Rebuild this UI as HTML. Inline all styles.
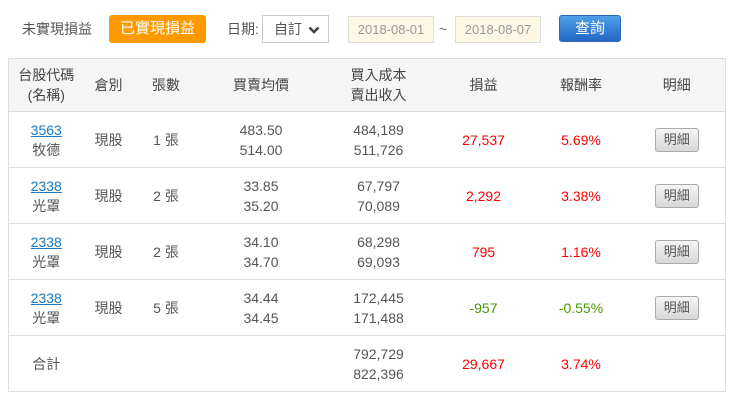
<!DOCTYPE html>
<html><head><meta charset="utf-8"><style>
*{box-sizing:border-box;margin:0;padding:0}
body{width:732px;height:405px;background:#fff;font-family:"Liberation Sans","Noto Sans CJK TC",sans-serif;font-size:14px;color:#555;position:relative;overflow:hidden}
.a{position:absolute}
.btnO{left:109px;top:15px;width:97px;height:28px;background:#f90;color:#fff;border-radius:3px;text-align:center;line-height:28px;font-size:15px}
.sel{left:262px;top:15px;width:67px;height:28px;border:1px solid #ccc;line-height:26px;padding-left:11px;font-size:14px}
.inp{top:16px;width:86px;height:27px;background:#fcf8e3;border:1px solid #ddd;color:#999;line-height:25px;text-align:center;font-size:13px}
.q{left:559px;top:15px;width:62px;height:27px;border-radius:3px;background:linear-gradient(#4fa0e6,#2366c4);border:1px solid #2a6ab8;color:#fff;text-align:center;line-height:25px;font-size:15px}
table{position:absolute;left:8px;top:58px;width:718px;border-collapse:collapse;border:1px solid #ddd}
td,th{text-align:center;border-top:1px solid #ddd;font-weight:normal;line-height:20px;padding:0}
th{background:#f5f5f5;height:53px;color:#444;font-size:14px}
td{height:56px}
a{color:#1a7ac7;text-decoration:underline}
.r{color:#f00}.g{color:#4a9a00}
.b{display:inline-block;width:44px;height:24px;line-height:22px;border:1px solid #aaa;border-radius:3px;background:linear-gradient(#f4f4f4,#d8d8d8);color:#555;font-size:13px}
</style></head><body>
<div class="a" style="left:22px;top:20px;line-height:18px">未實現損益</div>
<div class="a btnO">已實現損益</div>
<div class="a" style="left:227px;top:20px;line-height:18px">日期:</div>
<div class="a sel">自訂 <svg width="12" height="10" viewBox="0 0 12 10" style="vertical-align:-1px;margin-left:2px"><path d="M1.5 2.5L6 7L10.5 2.5" stroke="#444" stroke-width="2.6" fill="none"/></svg></div>
<div class="a inp" style="left:348px">2018-08-01</div>
<div class="a" style="left:439px;top:20px;line-height:18px;color:#777">~</div>
<div class="a inp" style="left:455px">2018-08-07</div>
<div class="a q">查詢</div>
<table>
<colgroup><col style="width:75px"><col style="width:50px"><col style="width:65px"><col style="width:125px"><col style="width:110px"><col style="width:100px"><col style="width:95px"><col></colgroup>
<tr><th>台股代碼<br>(名稱)</th><th>倉別</th><th>張數</th><th>買賣均價</th><th>買入成本<br>賣出收入</th><th>損益</th><th>報酬率</th><th>明細</th></tr>
<tr><td><a>3563</a><br>牧德</td><td>現股</td><td>1 張</td><td>483.50<br>514.00</td><td>484,189<br>511,726</td><td class="r">27,537</td><td class="r">5.69%</td><td><span class="b">明細</span></td></tr>
<tr><td><a>2338</a><br>光罩</td><td>現股</td><td>2 張</td><td>33.85<br>35.20</td><td>67,797<br>70,089</td><td class="r">2,292</td><td class="r">3.38%</td><td><span class="b">明細</span></td></tr>
<tr><td><a>2338</a><br>光罩</td><td>現股</td><td>2 張</td><td>34.10<br>34.70</td><td>68,298<br>69,093</td><td class="r">795</td><td class="r">1.16%</td><td><span class="b">明細</span></td></tr>
<tr><td><a>2338</a><br>光罩</td><td>現股</td><td>5 張</td><td>34.44<br>34.45</td><td>172,445<br>171,488</td><td class="g">-957</td><td class="g">-0.55%</td><td><span class="b">明細</span></td></tr>
<tr><td>合計</td><td></td><td></td><td></td><td>792,729<br>822,396</td><td class="r">29,667</td><td class="r">3.74%</td><td></td></tr>
</table>
</body></html>
